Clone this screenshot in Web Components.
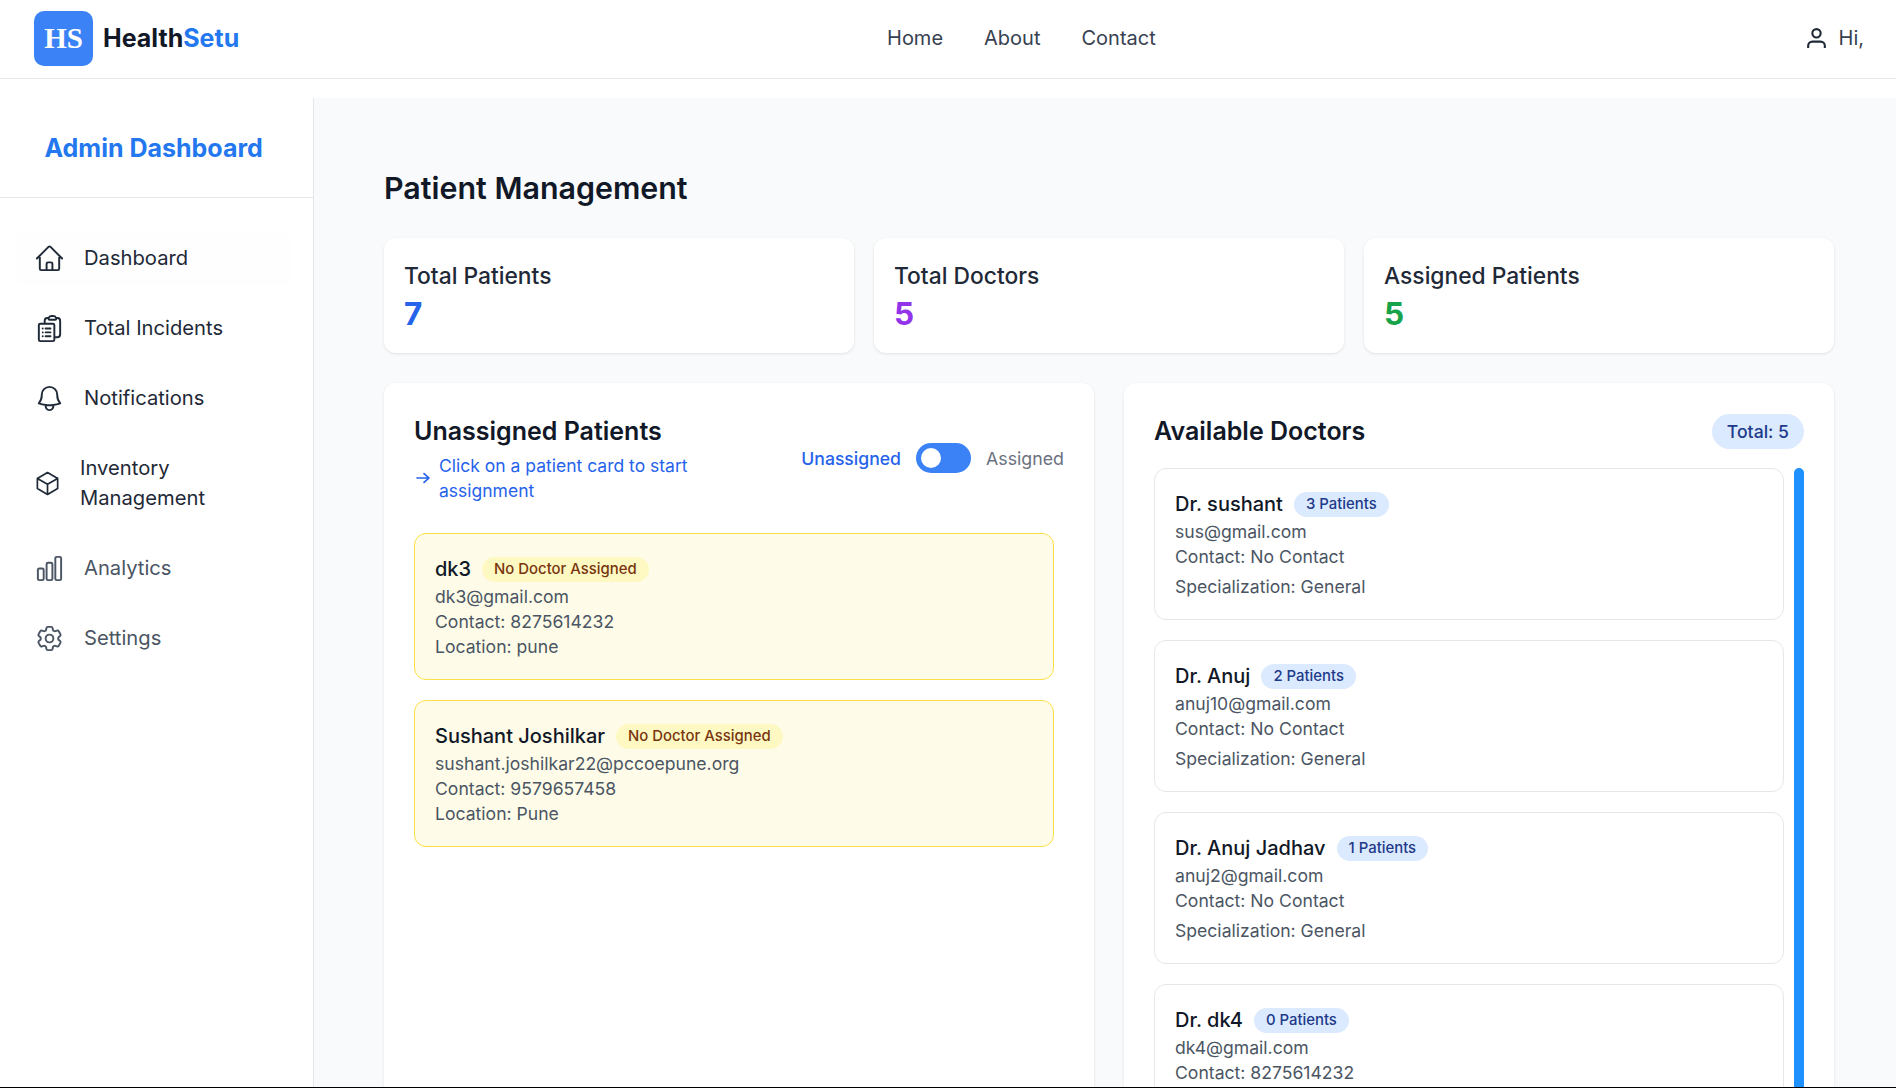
<!DOCTYPE html>
<html lang="en">
<head>
<meta charset="utf-8">
<title>HealthSetu</title>
<style>
  html, body { margin: 0; height: 1088px; overflow: hidden; background: #fff; }
  body { display: flex; flex-direction: column; font-family: Inter, "Noto Sans", sans-serif; color: #111827; }
  .shell { flex: 1; min-height: 0; display: flex; padding-top: 19px; overflow: hidden; }
  .edge { flex: none; height: 1px; background: #000; }
</style>
</head>
<body>
<app-header></app-header>
<div class="shell">
  <side-nav></side-nav>
  <patient-page></patient-page>
</div>
<div class="edge"></div>

<script>
const ICONS = {
    home: 'm2.25 12 8.954-8.955c.44-.439 1.152-.439 1.591 0L21.75 12M4.5 9.75v10.125c0 .621.504 1.125 1.125 1.125H9.75v-4.875c0-.621.504-1.125 1.125-1.125h2.25c.621 0 1.125.504 1.125 1.125V21h4.125c.621 0 1.125-.504 1.125-1.125V9.75M8.25 21h8.25',
    clipboard: 'M9 12h3.75M9 15h3.75M9 18h3.75m3 .75H18a2.25 2.25 0 0 0 2.25-2.25V6.108c0-1.135-.845-2.098-1.976-2.192a48.424 48.424 0 0 0-1.123-.08m-5.801 0c-.065.21-.1.433-.1.664 0 .414.336.75.75.75h4.5a.75.75 0 0 0 .75-.75 2.25 2.25 0 0 0-.1-.664m-5.8 0A2.251 2.251 0 0 1 13.5 2.25H15c1.012 0 1.867.668 2.15 1.586m-5.8 0c-.376.023-.75.05-1.124.08C9.095 4.01 8.25 4.973 8.25 6.108V8.25m0 0H4.875c-.621 0-1.125.504-1.125 1.125v11.25c0 .621.504 1.125 1.125 1.125h9.75c.621 0 1.125-.504 1.125-1.125V9.375c0-.621-.504-1.125-1.125-1.125H8.25ZM6.75 12h.008v.008H6.75V12Zm0 3h.008v.008H6.75V15Zm0 3h.008v.008H6.75V18Z',
    bell: 'M14.857 17.082a23.848 23.848 0 0 0 5.454-1.31A8.967 8.967 0 0 1 18 9.75V9A6 6 0 0 0 6 9v.75a8.967 8.967 0 0 1-2.312 6.022c1.733.64 3.56 1.085 5.455 1.31m5.714 0a24.255 24.255 0 0 1-5.714 0m5.714 0a3 3 0 1 1-5.714 0',
    cube: 'm21 7.5-9-5.25L3 7.5m18 0-9 5.25m9-5.25v9l-9 5.25M3 7.5l9 5.25M3 7.5v9l9 5.25m0-9v9',
    chart: 'M3 13.125C3 12.504 3.504 12 4.125 12h2.25c.621 0 1.125.504 1.125 1.125v6.75C7.5 20.496 6.996 21 6.375 21h-2.25A1.125 1.125 0 0 1 3 19.875v-6.75ZM9.75 8.625c0-.621.504-1.125 1.125-1.125h2.25c.621 0 1.125.504 1.125 1.125v11.25c0 .621-.504 1.125-1.125 1.125h-2.25a1.125 1.125 0 0 1-1.125-1.125V8.625ZM16.5 4.125c0-.621.504-1.125 1.125-1.125h2.25C20.496 3 21 3.504 21 4.125v15.75c0 .621-.504 1.125-1.125 1.125h-2.25a1.125 1.125 0 0 1-1.125-1.125V4.125Z',
    cog: 'M9.594 3.94c.09-.542.56-.94 1.11-.94h2.593c.55 0 1.02.398 1.11.94l.213 1.281c.063.374.313.686.645.87.074.04.147.083.22.127.325.196.72.257 1.075.124l1.217-.456a1.125 1.125 0 0 1 1.37.49l1.296 2.247a1.125 1.125 0 0 1-.26 1.431l-1.003.827c-.293.241-.438.613-.43.992a7.723 7.723 0 0 1 0 .255c-.008.378.137.75.43.991l1.004.827c.424.35.534.955.26 1.43l-1.298 2.247a1.125 1.125 0 0 1-1.369.491l-1.217-.456c-.355-.133-.75-.072-1.076.124a6.47 6.47 0 0 1-.22.128c-.331.183-.581.495-.644.869l-.213 1.281c-.09.543-.56.94-1.11.94h-2.594c-.55 0-1.019-.398-1.11-.94l-.213-1.281c-.062-.374-.312-.686-.644-.87a6.52 6.52 0 0 1-.22-.127c-.325-.196-.72-.257-1.076-.124l-1.217.456a1.125 1.125 0 0 1-1.369-.49l-1.297-2.247a1.125 1.125 0 0 1 .26-1.431l1.004-.827c.292-.24.437-.613.43-.991a6.932 6.932 0 0 1 0-.255c.007-.38-.138-.751-.43-.992l-1.004-.827a1.125 1.125 0 0 1-.26-1.43l1.297-2.247a1.125 1.125 0 0 1 1.37-.491l1.216.456c.356.133.751.072 1.076-.124.072-.044.146-.086.22-.128.332-.183.582-.495.644-.869l.214-1.28Z M15 12a3 3 0 1 1-6 0 3 3 0 0 1 6 0Z'
};

class AppHeader extends HTMLElement {
    constructor() {
        super();
        this.attachShadow({ mode: 'open' });
    }
    connectedCallback() {
        this.shadowRoot.innerHTML = `
            <style>
                :host { display: flex; flex: none; align-items: center; justify-content: space-between; height: 76px; padding: 0 32px 2px 34px; background: #fff; border-bottom: 1px solid #e5e7eb; }
                .brand { display: flex; align-items: center; gap: 10px; }
                .logo { width: 59px; height: 55px; border-radius: 10px; background: #3b82f6; color: #fff; display: flex; align-items: center; justify-content: center; font: 700 29px "Liberation Serif", serif; }
                .name { font-size: 25px; font-weight: 700; color: #111827; }
                .name span { color: #2378f0; }
                nav { display: flex; gap: 41px; font-size: 20px; color: #374151; }
                .user { display: flex; align-items: center; gap: 10px; font-size: 20px; color: #374151; }
                svg { display: block; }
            </style>
            <div class="brand"><div class="logo">HS</div><div class="name">Health<span>Setu</span></div></div>
            <nav><span>Home</span><span>About</span><span>Contact</span></nav>
            <div class="user">
                <svg width="25" height="25" viewBox="0 0 24 24" fill="none" stroke="#1f2937" stroke-width="2"><path d="M20 21v-2a4 4 0 0 0-4-4H8a4 4 0 0 0-4 4v2"/><circle cx="12" cy="7" r="4"/></svg>
                <span>Hi,</span>
            </div>
        `;
    }
}
customElements.define('app-header', AppHeader);

class NavItem extends HTMLElement {
    constructor() {
        super();
        this.attachShadow({ mode: 'open' });
    }
    connectedCallback() {
        const d = ICONS[this.getAttribute('icon')];
        this.shadowRoot.innerHTML = `
            <style>
                :host { display: flex; align-items: center; gap: 19.5px; padding: 12px 18px 12px 18.5px; border-radius: 8px; font-size: 20.2px; line-height: 30px; color: #1f2937; }
                :host([muted]) { color: #4b5563; }
                :host([active]) { background: #fefefe; }
                svg { flex: 0 1 31px; min-width: 0; height: 31px; margin: -1px 0; }
            </style>
            <svg viewBox="0 0 24 24" fill="none" stroke="currentColor" stroke-width="1.5" stroke-linecap="round" stroke-linejoin="round"><path d="${d}"/></svg>
            <span><slot></slot></span>
        `;
    }
}
customElements.define('nav-item', NavItem);

class SideNav extends HTMLElement {
    constructor() {
        super();
        this.attachShadow({ mode: 'open' });
    }
    connectedCallback() {
        this.shadowRoot.innerHTML = `
            <style>
                :host { display: block; flex: none; width: 313px; background: #fff; border-right: 1px solid #e5e7eb; }
                .title { height: 100px; box-sizing: border-box; padding: 0 44.5px; display: flex; align-items: center; border-bottom: 1px solid #e5e7eb; font-size: 25px; font-weight: 700; color: #2378f0; white-space: nowrap; }
                .items { display: flex; flex-direction: column; gap: 16px; padding: 33px 23px 0 15px; }
            </style>
            <div class="title">Admin Dashboard</div>
            <div class="items">
                <nav-item icon="home" active>Dashboard</nav-item>
                <nav-item icon="clipboard">Total Incidents</nav-item>
                <nav-item icon="bell">Notifications</nav-item>
                <nav-item icon="cube">Inventory Management</nav-item>
                <nav-item icon="chart" muted>Analytics</nav-item>
                <nav-item icon="cog" muted>Settings</nav-item>
            </div>
        `;
    }
}
customElements.define('side-nav', SideNav);

class StatCard extends HTMLElement {
    constructor() {
        super();
        this.attachShadow({ mode: 'open' });
    }
    connectedCallback() {
        this.shadowRoot.innerHTML = `
            <style>
                :host { display: block; height: 115px; box-sizing: border-box; padding: 20px; background: #fff; border-radius: 12px; box-shadow: 0 1px 3px rgba(0,0,0,.1); }
                .label { font-size: 22.8px; line-height: 36px; font-weight: 500; color: #1f2937; }
                .value { font-size: 31.5px; line-height: 40px; font-weight: 700; color: ${this.getAttribute('color')}; }
            </style>
            <div class="label">${this.getAttribute('label')}</div>
            <div class="value">${this.getAttribute('value')}</div>
        `;
    }
}
customElements.define('stat-card', StatCard);

class PersonCard extends HTMLElement {
    constructor() {
        super();
        this.attachShadow({ mode: 'open' });
    }
    connectedCallback() {
        this.shadowRoot.innerHTML = `
            <style>
                :host { display: block; box-sizing: border-box; padding: 20px; border: 1.5px solid #e5e7eb; border-radius: 12px; background: #fff; }
                :host([warn]) { background: #fefce8; border-color: #fde047; }
                .top { display: flex; align-items: center; gap: 11px; height: 30px; }
                .name { font-size: 20px; font-weight: 500; color: #111827; }
                .tag { height: 25px; box-sizing: border-box; padding: 0 12px; border-radius: 999px; display: flex; align-items: center; font-size: 14.9px; font-weight: 500; background: #dbeafe; color: #1e3a8a; }
                :host([warn]) .tag { background: #fef9c3; color: #78350f; }
            </style>
            <div class="top"><span class="name">${this.getAttribute('name')}</span><span class="tag">${this.getAttribute('tag')}</span></div>
            <slot></slot>
        `;
    }
}
customElements.define('person-card', PersonCard);

class PatientPanel extends HTMLElement {
    constructor() {
        super();
        this.attachShadow({ mode: 'open' });
    }
    connectedCallback() {
        this.shadowRoot.innerHTML = `
            <style>
                :host { display: block; padding: 30px; background: #fff; border-radius: 12px; box-shadow: 0 1px 3px rgba(0,0,0,.1); }
                .head { display: flex; align-items: center; justify-content: space-between; margin-bottom: 30px; }
                h2 { margin: 0; font-size: 25px; line-height: 36px; font-weight: 600; color: #111827; }
                .hint { display: flex; align-items: center; gap: 8px; width: 290px; margin-top: 4px; font-size: 17.5px; line-height: 25px; color: #2563eb; }
                .hint svg { flex: none; width: 16px; height: 14px; margin-left: 1px; }
                .switch { display: flex; align-items: center; gap: 15px; font-size: 17.6px; font-weight: 500; color: #2563eb; }
                .switch .off { color: #6b7280; font-weight: 400; font-size: 17.8px; }
                .track { width: 55px; height: 30px; border-radius: 15px; background: #3b82f6; display: flex; align-items: center; padding-left: 5px; box-sizing: border-box; }
                .knob { width: 20px; height: 20px; border-radius: 50%; background: #fff; }
                .list { display: flex; flex-direction: column; gap: 20px; padding-right: 10px; }
            </style>
            <div class="head">
                <div>
                    <h2>Unassigned Patients</h2>
                    <div class="hint">
                        <svg viewBox="0 0 24 24" preserveAspectRatio="none" fill="none" stroke="currentColor" stroke-width="2.5" stroke-linecap="round" stroke-linejoin="round"><path d="M13.5 4.5 21 12m0 0-7.5 7.5M21 12H3"/></svg>
                        <span>Click on a patient card to start assignment</span>
                    </div>
                </div>
                <div class="switch"><span>Unassigned</span><div class="track"><div class="knob"></div></div><span class="off">Assigned</span></div>
            </div>
            <div class="list"><slot></slot></div>
        `;
    }
}
customElements.define('patient-panel', PatientPanel);

class DoctorPanel extends HTMLElement {
    constructor() {
        super();
        this.attachShadow({ mode: 'open' });
    }
    connectedCallback() {
        this.shadowRoot.innerHTML = `
            <style>
                :host { display: block; padding: 30px; background: #fff; border-radius: 12px; box-shadow: 0 1px 3px rgba(0,0,0,.1); }
                .head { display: flex; align-items: center; justify-content: space-between; height: 36px; margin-bottom: 19px; }
                h2 { margin: 0; font-size: 25px; line-height: 36px; font-weight: 600; color: #111827; }
                .total { height: 35px; box-sizing: border-box; padding: 0 15px; border-radius: 999px; display: flex; align-items: center; background: #dbeafe; color: #1e3a8a; font-size: 17.6px; font-weight: 500; }
                .body { display: flex; gap: 10px; }
                .list { flex: 1; min-width: 0; display: flex; flex-direction: column; gap: 20px; }
                .thumb { flex: none; width: 10px; border-radius: 5px; background: #1e90ff; }
            </style>
            <div class="head"><h2>Available Doctors</h2><div class="total">Total: 5</div></div>
            <div class="body"><div class="list"><slot></slot></div><div class="thumb"></div></div>
        `;
    }
}
customElements.define('doctor-panel', DoctorPanel);

class PatientPage extends HTMLElement {
    constructor() {
        super();
        this.attachShadow({ mode: 'open' });
    }
    connectedCallback() {
        const doctors = [
            ['Dr. sushant', '3 Patients', 'sus@gmail.com', 'No Contact', 'General'],
            ['Dr. Anuj', '2 Patients', 'anuj10@gmail.com', 'No Contact', 'General'],
            ['Dr. Anuj Jadhav', '1 Patients', 'anuj2@gmail.com', 'No Contact', 'General'],
            ['Dr. dk4', '0 Patients', 'dk4@gmail.com', '8275614232']
        ];
        this.shadowRoot.innerHTML = `
            <style>
                :host { display: block; flex: 1; min-width: 0; box-sizing: border-box; padding: 68px 62px 0 70px; background: #f9fafb; }
                h1 { margin: 0 0 28px; font-size: 30.4px; line-height: 44px; font-weight: 600; color: #111827; }
                .stats { display: grid; grid-template-columns: repeat(3, 1fr); gap: 20px; margin-bottom: 30px; }
                .panels { display: grid; grid-template-columns: 1fr 1fr; gap: 30px; }
                p { margin: 0; font-size: 17.6px; line-height: 25px; color: #4b5563; }
                p.spec { margin-top: 5px; }
            </style>
            <h1>Patient Management</h1>
            <div class="stats">
                <stat-card label="Total Patients" value="7" color="#2563eb"></stat-card>
                <stat-card label="Total Doctors" value="5" color="#9333ea"></stat-card>
                <stat-card label="Assigned Patients" value="5" color="#16a34a"></stat-card>
            </div>
            <div class="panels">
                <patient-panel>
                    <person-card warn name="dk3" tag="No Doctor Assigned">
                        <p>dk3@gmail.com</p><p>Contact: 8275614232</p><p>Location: pune</p>
                    </person-card>
                    <person-card warn name="Sushant Joshilkar" tag="No Doctor Assigned">
                        <p>sushant.joshilkar22@pccoepune.org</p><p>Contact: 9579657458</p><p>Location: Pune</p>
                    </person-card>
                </patient-panel>
                <doctor-panel>
                    ${doctors.map(d => `
                        <person-card name="${d[0]}" tag="${d[1]}">
                            <p>${d[2]}</p><p>Contact: ${d[3]}</p>${d[4] ? `<p class="spec">Specialization: ${d[4]}</p>` : ''}
                        </person-card>
                    `).join('')}
                </doctor-panel>
            </div>
        `;
    }
}
customElements.define('patient-page', PatientPage);
</script>
</body>
</html>
